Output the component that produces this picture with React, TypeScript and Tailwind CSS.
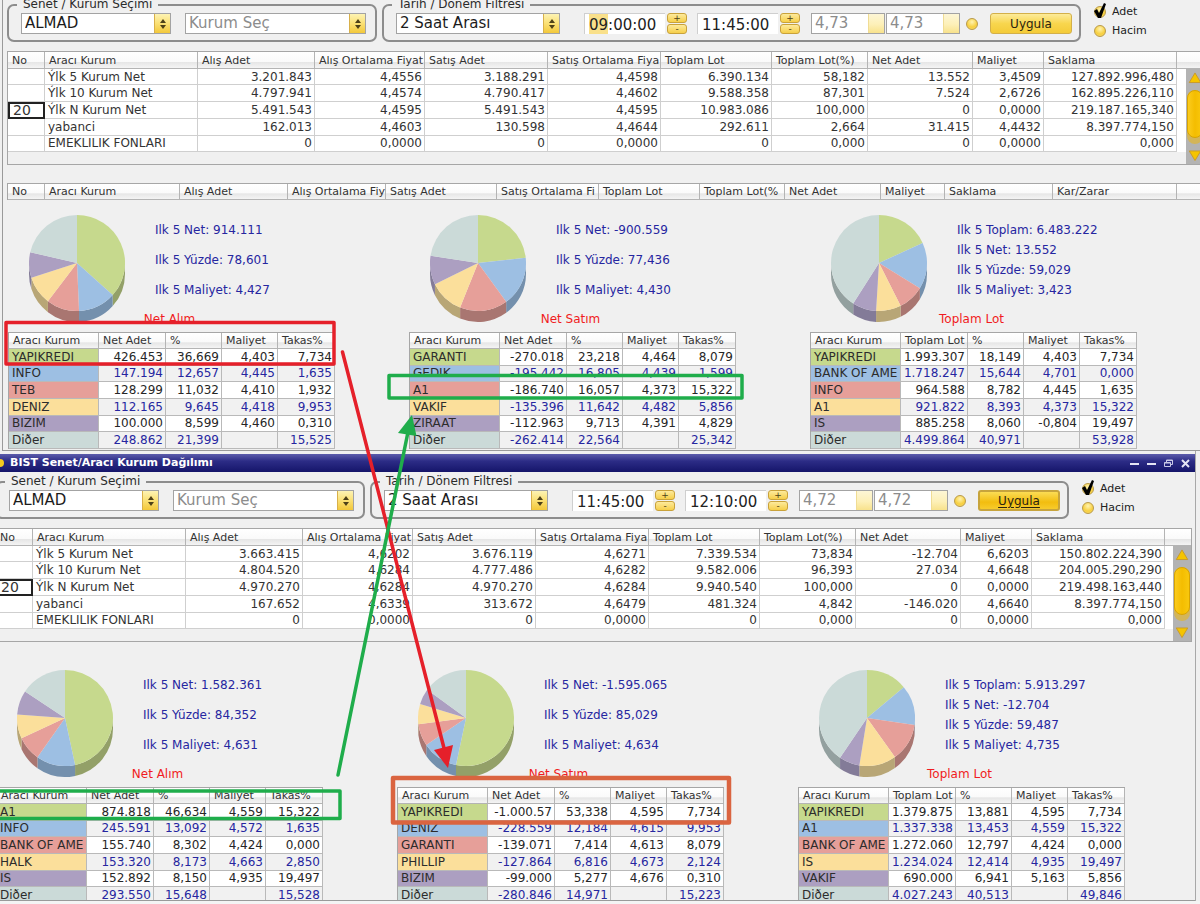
import clsx from 'clsx';

type SummaryRow = string[];

interface Share {
  title: string;
  amountLabel: string;
  stats: string[];
  rows: string[][];
}

interface PanelData {
  from: string;
  to: string;
  price: string;
  summary: SummaryRow[];
  shares: Share[];
}

const summaryColumns = [
  { label: 'No', width: 'w-[37px]' },
  { label: 'Aracı Kurum', width: 'w-[153px]' },
  { label: 'Alış Adet', width: 'w-[117px]' },
  { label: 'Alış Ortalama Fiyat', width: 'w-[110px]' },
  { label: 'Satış Adet', width: 'w-[123px]' },
  { label: 'Satış Ortalama Fiya', width: 'w-[113px]' },
  { label: 'Toplam Lot', width: 'w-[111px]' },
  { label: 'Toplam Lot(%)', width: 'w-[96px]' },
  { label: 'Net Adet', width: 'w-[105px]' },
  { label: 'Maliyet', width: 'w-[71px]' },
  { label: 'Saklama', width: 'w-[133px]' },
];

const detailColumns = [
  { label: 'No', width: 'w-[37px]' },
  { label: 'Aracı Kurum', width: 'w-[135px]' },
  { label: 'Alış Adet', width: 'w-[108px]' },
  { label: 'Alış Ortalama Fiy', width: 'w-[98px]' },
  { label: 'Satış Adet', width: 'w-[111px]' },
  { label: 'Satış Ortalama Fi', width: 'w-[102px]' },
  { label: 'Toplam Lot', width: 'w-[101px]' },
  { label: 'Toplam Lot(%', width: 'w-[85px]' },
  { label: 'Net Adet', width: 'w-[96px]' },
  { label: 'Maliyet', width: 'w-[64px]' },
  { label: 'Saklama', width: 'w-[108px]' },
  { label: 'Kar/Zarar', width: 'w-[124px]' },
];

const morning: PanelData = {
  from: '09:00:00',
  to: '11:45:00',
  price: '4,73',
  summary: [
    ['Ýlk 5 Kurum Net', '3.201.843', '4,4556', '3.188.291', '4,4598', '6.390.134', '58,182', '13.552', '3,4509', '127.892.996,480'],
    ['Ýlk 10 Kurum Net', '4.797.941', '4,4574', '4.790.417', '4,4602', '9.588.358', '87,301', '7.524', '2,6726', '162.895.226,110'],
    ['Ýlk N Kurum Net', '5.491.543', '4,4595', '5.491.543', '4,4595', '10.983.086', '100,000', '0', '0,0000', '219.187.165,340'],
    ['yabanci', '162.013', '4,4603', '130.598', '4,4644', '292.611', '2,664', '31.415', '4,4432', '8.397.774,150'],
    ['EMEKLILIK FONLARI', '0', '0,0000', '0', '0,0000', '0', '0,000', '0', '0,0000', '0,000'],
  ],
  shares: [
    {
      title: 'Net Alım',
      amountLabel: 'Net Adet',
      stats: ['Ilk 5 Net: 914.111', 'Ilk 5 Yüzde: 78,601', 'Ilk 5 Maliyet: 4,427'],
      rows: [
        ['YAPIKREDI', '426.453', '36,669', '4,403', '7,734'],
        ['INFO', '147.194', '12,657', '4,445', '1,635'],
        ['TEB', '128.299', '11,032', '4,410', '1,932'],
        ['DENIZ', '112.165', '9,645', '4,418', '9,953'],
        ['BIZIM', '100.000', '8,599', '4,460', '0,310'],
        ['Diðer', '248.862', '21,399', '', '15,525'],
      ],
    },
    {
      title: 'Net Satım',
      amountLabel: 'Net Adet',
      stats: ['Ilk 5 Net: -900.559', 'Ilk 5 Yüzde: 77,436', 'Ilk 5 Maliyet: 4,430'],
      rows: [
        ['GARANTI', '-270.018', '23,218', '4,464', '8,079'],
        ['GEDIK', '-195.442', '16,805', '4,439', '1,599'],
        ['A1', '-186.740', '16,057', '4,373', '15,322'],
        ['VAKIF', '-135.396', '11,642', '4,482', '5,856'],
        ['ZIRAAT', '-112.963', '9,713', '4,391', '4,829'],
        ['Diðer', '-262.414', '22,564', '', '25,342'],
      ],
    },
    {
      title: 'Toplam Lot',
      amountLabel: 'Toplam Lot',
      stats: ['Ilk 5 Toplam: 6.483.222', 'Ilk 5 Net: 13.552', 'Ilk 5 Yüzde: 59,029', 'Ilk 5 Maliyet: 3,423'],
      rows: [
        ['YAPIKREDI', '1.993.307', '18,149', '4,403', '7,734'],
        ['BANK OF AME', '1.718.247', '15,644', '4,701', '0,000'],
        ['INFO', '964.588', '8,782', '4,445', '1,635'],
        ['A1', '921.822', '8,393', '4,373', '15,322'],
        ['IS', '885.258', '8,060', '-0,804', '19,497'],
        ['Diðer', '4.499.864', '40,971', '', '53,928'],
      ],
    },
  ],
};

const noon: PanelData = {
  from: '11:45:00',
  to: '12:10:00',
  price: '4,72',
  summary: [
    ['Ýlk 5 Kurum Net', '3.663.415', '4,6202', '3.676.119', '4,6271', '7.339.534', '73,834', '-12.704', '6,6203', '150.802.224,390'],
    ['Ýlk 10 Kurum Net', '4.804.520', '4,6284', '4.777.486', '4,6282', '9.582.006', '96,393', '27.034', '4,6648', '204.005.290,290'],
    ['Ýlk N Kurum Net', '4.970.270', '4,6284', '4.970.270', '4,6284', '9.940.540', '100,000', '0', '0,0000', '219.498.163,440'],
    ['yabanci', '167.652', '4,6339', '313.672', '4,6479', '481.324', '4,842', '-146.020', '4,6640', '8.397.774,150'],
    ['EMEKLILIK FONLARI', '0', '0,0000', '0', '0,0000', '0', '0,000', '0', '0,0000', '0,000'],
  ],
  shares: [
    {
      title: 'Net Alım',
      amountLabel: 'Net Adet',
      stats: ['Ilk 5 Net: 1.582.361', 'Ilk 5 Yüzde: 84,352', 'Ilk 5 Maliyet: 4,631'],
      rows: [
        ['A1', '874.818', '46,634', '4,559', '15,322'],
        ['INFO', '245.591', '13,092', '4,572', '1,635'],
        ['BANK OF AME', '155.740', '8,302', '4,424', '0,000'],
        ['HALK', '153.320', '8,173', '4,663', '2,850'],
        ['IS', '152.892', '8,150', '4,935', '19,497'],
        ['Diðer', '293.550', '15,648', '', '15,528'],
      ],
    },
    {
      title: 'Net Satım',
      amountLabel: 'Net Adet',
      stats: ['Ilk 5 Net: -1.595.065', 'Ilk 5 Yüzde: 85,029', 'Ilk 5 Maliyet: 4,634'],
      rows: [
        ['YAPIKREDI', '-1.000.57', '53,338', '4,595', '7,734'],
        ['DENIZ', '-228.559', '12,184', '4,615', '9,953'],
        ['GARANTI', '-139.071', '7,414', '4,613', '8,079'],
        ['PHILLIP', '-127.864', '6,816', '4,673', '2,124'],
        ['BIZIM', '-99.000', '5,277', '4,676', '0,310'],
        ['Diðer', '-280.846', '14,971', '', '15,223'],
      ],
    },
    {
      title: 'Toplam Lot',
      amountLabel: 'Toplam Lot',
      stats: ['Ilk 5 Toplam: 5.913.297', 'Ilk 5 Net: -12.704', 'Ilk 5 Yüzde: 59,487', 'Ilk 5 Maliyet: 4,735'],
      rows: [
        ['YAPIKREDI', '1.379.875', '13,881', '4,595', '7,734'],
        ['A1', '1.337.338', '13,453', '4,559', '15,322'],
        ['BANK OF AME', '1.272.060', '12,797', '4,424', '0,000'],
        ['IS', '1.234.024', '12,414', '4,935', '19,497'],
        ['VAKIF', '690.000', '6,941', '5,163', '5,856'],
        ['Diðer', '4.027.243', '40,513', '', '49,846'],
      ],
    },
  ],
};

const rowColors = ['bg-[#c6d98d]', 'bg-[#9dbfe3]', 'bg-[#e69f99]', 'bg-[#fbdf9b]', 'bg-[#ac9fc1]', 'bg-[#cbdad8]'];
const topColors = ['#c6d98d', '#9dbfe3', '#e69f99', '#fbdf9b', '#ac9fc1', '#cbdad8'];
const sideColors = ['#93a068', '#7490ad', '#a97671', '#b8a676', '#837b98', '#93a09f'];

const headerCell =
  'overflow-hidden whitespace-nowrap border-r border-b border-[#b4b4b4] bg-[linear-gradient(#fff,#fafafa_60%,#e6e6e6_65%,#f4f4f4)] p-0 pt-px pl-1 text-left text-[11px] leading-[14px] font-normal text-[#333]';

function Pie({ values }: { values: number[] }) {
  const r = 48;
  const depth = 11;
  const total = values.reduce((a, b) => a + b, 0);
  const x = (t: number) => r + r * Math.sin(t * 2 * Math.PI);
  const y = (t: number) => r - r * Math.cos(t * 2 * Math.PI);

  let acc = 0;
  const slices = values.map((v) => {
    const start = acc / total;
    acc += v;
    return { start, end: acc / total };
  });

  return (
    <svg className="h-[108px] w-24 shrink-0" viewBox="0 0 96 108">
      {/* Side wall, only the lower half is visible */}
      {slices.map(({ start, end }, i) => {
        const a = Math.max(start, 0.25);
        const b = Math.min(end, 0.75);
        if (a >= b) return null;
        return (
          <path
            key={i}
            fill={sideColors[i]}
            d={`M${x(a)} ${y(a)}A${r} ${r} 0 0 1 ${x(b)} ${y(b)}V${y(b) + depth}A${r} ${r} 0 0 0 ${x(a)} ${y(a) + depth}Z`}
          />
        );
      })}
      {/* Top face */}
      {slices.map(({ start, end }, i) => (
        <path
          key={i}
          fill={topColors[i]}
          d={`M${r} ${r}L${x(start)} ${y(start)}A${r} ${r} 0 ${end - start > 0.5 ? 1 : 0} 1 ${x(end)} ${y(end)}Z`}
        />
      ))}
    </svg>
  );
}

interface ComboProps {
  label: string;
  value: string;
  className: string;
  muted?: boolean;
  disabled?: boolean;
}

function Combo({ label, value, className, muted, disabled }: ComboProps) {
  return (
    <div className={clsx('flex h-[21px] border border-[#a3a3a3] bg-white', className)}>
      <select
        aria-label={label}
        disabled={disabled}
        className={clsx(
          'min-w-0 flex-1 appearance-none pl-[3px] text-[15px] leading-[19px] opacity-100 outline-none',
          muted || disabled ? 'text-[#8c8c8c]' : 'text-[#1c1c1c]'
        )}
      >
        <option>{value}</option>
      </select>
      <span
        className={clsx(
          'flex w-4 items-center justify-center border-l',
          disabled
            ? 'border-[#f0dc94] bg-[linear-gradient(#fdf6d6,#fdf0b8_55%,#f8e28c)]'
            : 'border-[#d8b04a] bg-[linear-gradient(#fdf3b4,#fbe27a_45%,#f3c83a)]'
        )}
      >
        {!disabled && (
          <svg width="8" height="12" viewBox="0 0 8 12" fill="#4d4018">
            <path d="M4 1l3 4H1zM4 11L1 7h6z" />
          </svg>
        )}
      </span>
    </div>
  );
}

function TimeBox({ label, value, active }: { label: string; value: string; active?: boolean }) {
  const knob =
    'flex h-[10px] items-center justify-center rounded-[3px] border border-[#c9a23a] bg-[linear-gradient(#fdea9c,#f6cf4a)] text-[9px] leading-none text-[#4d4018]';
  return (
    <div className="flex gap-0.5">
      <input
        aria-label={label}
        defaultValue={value}
        className={clsx(
          'h-[21px] w-[81px] border-t border-l border-[#cfcfcf] pt-0.5 pl-1 text-[15px] leading-[18px] text-[#222] outline-none',
          active ? 'bg-[linear-gradient(to_right,#fff_4px,#f9e08a_4px_23px,#fff_23px)]' : 'bg-white'
        )}
      />
      <div className="flex w-5 flex-col gap-px">
        <button type="button" className={knob}>+</button>
        <button type="button" className={knob}>-</button>
      </div>
    </div>
  );
}

const dot =
  'block size-3 appearance-none rounded-full border border-[#b99a48] bg-[radial-gradient(circle_at_50%_30%,#fff3b0,#f7cf3f_60%,#fbe07a)]';

function Filters({ id, data, focused }: { id: string; data: PanelData; focused?: boolean }) {
  const group = 'flex rounded-[7px] border-2 border-[#8d8d8d] pb-1.5 pl-3';
  const legend = '-ml-1 px-1.5 text-[12px] leading-[17px] text-[#2b2b2b]';
  return (
    <form className="flex gap-[5px] whitespace-nowrap" onSubmit={(e) => e.preventDefault()}>
      <fieldset className={clsx(group, 'pr-[9px]')}>
        <legend className={legend}>Senet / Kurum Seçimi</legend>
        <div className="flex gap-3.5">
          <Combo label="Senet" value="ALMAD" className="w-[150px]" />
          <Combo label="Kurum" value="Kurum Seç" className="w-[181px]" muted />
        </div>
      </fieldset>
      <fieldset className={clsx(group, 'pr-[7px]')}>
        <legend className={legend}>Tarih / Dönem Filtresi</legend>
        <div className="flex items-center">
          <Combo label="Dönem" value="2 Saat Arası" className="mr-6 w-[164px]" />
          <div className="mr-[11px] flex gap-2.5">
            <TimeBox label="Başlangıç" value={data.from} active={!focused} />
            <TimeBox label="Bitiş" value={data.to} />
          </div>
          <div className="mr-1.5 flex gap-px">
            <Combo label="Alt fiyat" value={data.price} className="w-[74px]" disabled />
            <Combo label="Üst fiyat" value={data.price} className="w-[74px]" disabled />
          </div>
          <input type="checkbox" aria-label="Fiyat filtresi" className={clsx(dot, 'mr-3')} />
          <button
            type="submit"
            className={clsx(
              'h-[21px] w-[82px] rounded-[3px] border text-[12px] leading-4 font-medium text-[#2b2410]',
              focused
                ? 'border-2 border-[#c7a43c] bg-[linear-gradient(#fbdc55,#f2bd0f_60%,#f7cb2c)] underline underline-offset-2'
                : 'border-[#d3b04a] bg-[linear-gradient(#fdeb9a,#f8d64e_50%,#f4cb38)]'
            )}
          >
            Uygula
          </button>
        </div>
      </fieldset>
      <div className="ml-2 flex flex-col gap-1 pt-2 text-[11px] leading-[15px] text-[#222]">
        <label className="relative flex items-center gap-1.5">
          <input type="radio" name={`${id}-unit`} defaultChecked className={dot} />
          Adet
          <svg className="absolute -top-px left-0" width="14" height="16" viewBox="0 0 14 16">
            <path d="M0 8l3-2 2 4 5-10 2 1-5 14H4z" fill="#000" />
          </svg>
        </label>
        <label className="flex items-center gap-1.5">
          <input type="radio" name={`${id}-unit`} className={dot} />
          Hacim
        </label>
      </div>
    </form>
  );
}

function ScrollBar() {
  return (
    <div className="absolute top-[17px] right-0 bottom-0 flex w-[18px] flex-col items-center justify-between bg-[#b3b3b3] py-[3px]">
      <svg width="16" height="12" viewBox="0 0 16 12">
        <path d="M8 1l6 10H2z" fill="#f5c400" stroke="#c99a2a" />
      </svg>
      <div className="flex w-4 flex-1 flex-col py-1.5">
        <div className="w-full rounded-full bg-[#d3b559] pb-1.5">
          <div className="h-[48px] rounded-full border border-[#d8a400] bg-[linear-gradient(to_right,#fbcb1d,#f4bd00_50%,#f9c80e)]" />
        </div>
      </div>
      <svg width="16" height="12" viewBox="0 0 16 12">
        <path d="M8 11L2 1h12z" fill="#f5c400" stroke="#c99a2a" />
      </svg>
    </div>
  );
}

function SummaryTable({ rows }: { rows: SummaryRow[] }) {
  const cell = 'whitespace-nowrap border-r border-b border-[#cfcfcf] p-0';
  return (
    <div className="relative mt-[9px] border border-[#a6a6a6] pb-3">
      <table className="h-[100px] w-full table-fixed border-separate border-spacing-0 text-[12px] leading-[14px] text-[#333]">
        <thead>
          <tr className="h-[17px]">
            {summaryColumns.map((c) => (
              <th key={c.label} className={clsx(headerCell, c.width)}>
                {c.label}
              </th>
            ))}
            <th className={clsx(headerCell, 'border-r-0')} />
          </tr>
        </thead>
        <tbody>
          {rows.map((row, r) => (
            <tr key={r} className="bg-white">
              {r === 2 ? (
                <td className="border-2 border-[#222] p-0">
                  <input
                    aria-label="N"
                    defaultValue="20"
                    className="block h-3 w-full pl-[3px] text-[14px] leading-3 outline-none"
                  />
                </td>
              ) : (
                <td className={cell} />
              )}
              {row.map((v, i) => (
                <td key={i} className={clsx(cell, i === 0 ? 'pl-[3px]' : 'pr-0.5 text-right')}>
                  {v}
                </td>
              ))}
              <td className="p-0" />
            </tr>
          ))}
        </tbody>
      </table>
      <ScrollBar />
    </div>
  );
}

function DetailHeader() {
  return (
    <table className="mt-[18px] w-full table-fixed border-separate border-spacing-0 border-t border-l border-[#a6a6a6]">
      <thead>
        <tr>
          {detailColumns.map((c) => (
            <th key={c.label} className={clsx(headerCell, c.width)}>
              {c.label}
            </th>
          ))}
          <th className={headerCell} />
        </tr>
      </thead>
    </table>
  );
}

function ShareCard({ share }: { share: Share }) {
  const dense = share.stats.length > 3;
  return (
    <section className="w-[327px] shrink-0">
      <div className="flex h-[108px] gap-[30px] pl-[21px]">
        <Pie values={share.rows.map((r) => parseFloat(r[2].replace(',', '.')))} />
        <div
          className={clsx(
            'text-[12px] whitespace-nowrap text-[#2626a0]',
            dense ? 'pt-[5px] leading-5' : 'leading-[30px]'
          )}
        >
          {share.stats.map((s) => (
            <p key={s}>{s}</p>
          ))}
        </div>
      </div>
      <table className="-mt-3 h-[117px] w-full table-fixed border-separate border-spacing-0 border-t border-l border-[#a6a6a6] text-[12px] leading-[14px]">
        <caption className="pr-1 pb-[5px] text-center leading-4 text-[#f01c22]">{share.title}</caption>
        <thead>
          <tr className="h-4">
            <th className={clsx(headerCell, 'w-[90px]')}>Aracı Kurum</th>
            <th className={clsx(headerCell, 'w-[67px]')}>{share.amountLabel}</th>
            <th className={clsx(headerCell, 'w-[56px]')}>%</th>
            <th className={clsx(headerCell, 'w-[56px]')}>Maliyet</th>
            <th className={headerCell}>Takas%</th>
          </tr>
        </thead>
        <tbody>
          {share.rows.map((row, r) => (
            <tr key={r} className={r % 2 ? 'bg-[#f1f1f1] text-[#2626a0]' : 'bg-white text-[#262626]'}>
              {row.map((v, i) => (
                <td
                  key={i}
                  className={clsx(
                    'whitespace-nowrap border-r border-b border-[#b9b9b9] p-0',
                    i === 0 ? 'pl-[3px] text-[#2c2c2c]' : 'pr-0.5 text-right',
                    i === 0 && rowColors[r]
                  )}
                >
                  {v}
                </td>
              ))}
            </tr>
          ))}
        </tbody>
      </table>
    </section>
  );
}

function Shares({ shares, className }: { shares: Share[]; className: string }) {
  return (
    <div className={clsx('flex gap-[74px] pl-px', className)}>
      {shares.map((s) => (
        <ShareCard key={s.title} share={s} />
      ))}
    </div>
  );
}

function TitleBar() {
  return (
    <header className="mb-px flex h-[18px] items-center justify-between bg-[linear-gradient(#5c5cab,#2c2c86_40%,#15156a)] pr-1 text-white">
      <h1 className="flex items-center gap-1.5 text-[11px] font-bold">
        <span className="-ml-1 size-2 rounded-full bg-[#f5c91e]" />
        BIST Senet/Aracı Kurum Dağılımı
      </h1>
      <div className="flex gap-1.5">
        <button type="button" aria-label="Sabitle">
          <svg width="11" height="11" viewBox="0 0 11 11" stroke="#e4e4f4" strokeWidth="2"><path d="M1 6h9" /></svg>
        </button>
        <button type="button" aria-label="Küçült">
          <svg width="11" height="11" viewBox="0 0 11 11" stroke="#e4e4f4" strokeWidth="2"><path d="M1 6h9" /></svg>
        </button>
        <button type="button" aria-label="Geri yükle">
          <svg width="11" height="11" viewBox="0 0 11 11" fill="none" stroke="#c9c9e6"><path d="M3.500 4V2h6v4.500h-2M1.500 4.500h6v4h-6zM3.500 2.500h6M1.500 5h6" /></svg>
        </button>
        <button type="button" aria-label="Kapat">
          <svg width="11" height="11" viewBox="0 0 11 11" stroke="#e4e4f4" strokeWidth="2"><path d="M2 2l7 7M9 2l-7 7" /></svg>
        </button>
      </div>
    </header>
  );
}

function Annotations() {
  return (
    <svg
      className="pointer-events-none absolute top-0 left-0"
      width="1200"
      height="904"
      viewBox="0 0 1200 904"
      fill="none"
      strokeLinecap="round"
      strokeLinejoin="round"
    >
      <g stroke="#e5202a" strokeWidth="3.500">
        <rect x="6" y="322.500" width="328" height="41.500" />
        <path d="M342.500 352L445 752" />
        <path d="M434 750l19-5-5 23z" fill="#e5202a" stroke="none" />
      </g>
      <g stroke="#1fad4b" strokeWidth="3.500">
        <rect x="389" y="375.500" width="353" height="22.500" />
        <rect x="-6" y="791" width="346" height="27.500" />
        <path d="M338 775L408 432" />
        <path d="M398 433l18.500 3L412 415z" fill="#1fad4b" stroke="none" />
      </g>
      <rect x="393" y="778" width="336" height="44.500" stroke="#da6440" strokeWidth="4.500" />
    </svg>
  );
}

export default function App() {
  return (
    <main className="relative overflow-hidden bg-[#f0f0f0] font-['DejaVu_Sans',Verdana,sans-serif]">
      {/* Back window */}
      <section className="-mt-1 ml-0.5 w-[calc(100%+6px)] border-b border-l border-[#9a9a9a] pr-[3px] pb-px pl-1">
        <Filters id="morning" data={morning} />
        <SummaryTable rows={morning.summary} />
        <DetailHeader />
        <Shares shares={morning.shares} className="mt-[15px]" />
      </section>

      {/* Front window */}
      <div className="mr-1 border-r border-[#a8a8a8] pt-[3px]">
        <TitleBar />
        <section className="-ml-2.5 overflow-hidden border-b border-[#9a9a9a] pr-[3px] pl-[5px]">
          <Filters id="noon" data={noon} focused />
          <SummaryTable rows={noon.summary} />
          <Shares shares={noon.shares} className="mt-7 -mb-1" />
        </section>
      </div>
      <footer className="h-[5px] border-b border-[#3a3a3a] bg-[#f4f4f4]" />

      <Annotations />
    </main>
  );
}
